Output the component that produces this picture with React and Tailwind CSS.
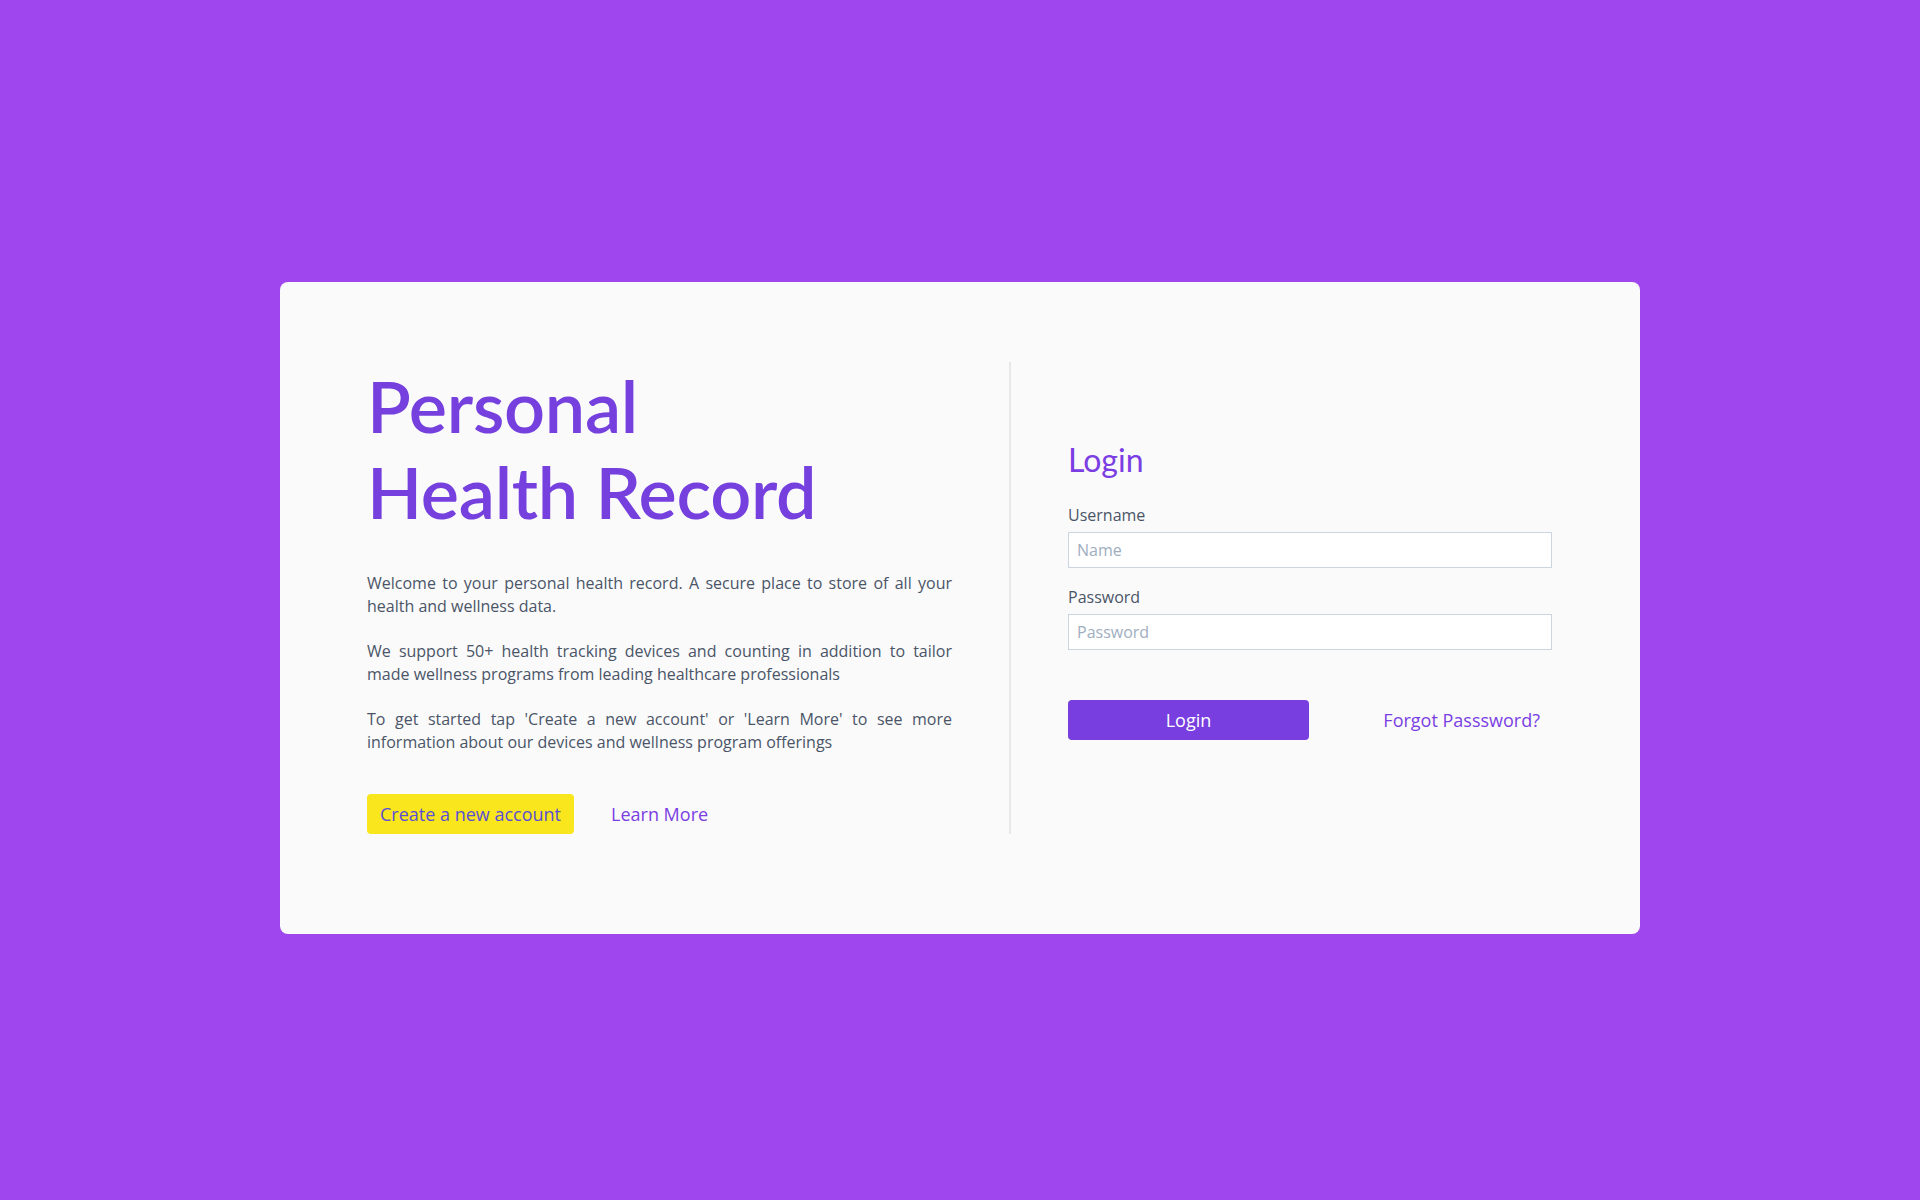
export default function App() {
  return (
    <div className="min-h-screen w-full bg-[#a046ef] flex items-center justify-center pt-4 font-['Open_Sans',sans-serif]">
      <div className="w-[1360px] h-[652px] bg-[#fafafa] rounded-lg pl-[87px] pr-[88px] pt-[80px] pb-[100px] flex">
        <div className="w-[585px] flex flex-col">
          <h1 className="font-['Lato',sans-serif] font-semibold text-[72px] leading-[1.2] tracking-[-0.3px] text-[#7540de]">
            Personal
            <br />
            Health Record
          </h1>

          <div className="mt-[37px] text-[16px] leading-[23px] text-[#4a5568] text-justify">
            <p className="mb-[22px]">
              Welcome to your personal health record. A secure place to store of all your health and wellness data.
            </p>
            <p className="mb-[22px]">
              We support 50+ health tracking devices and counting in addition to tailor made wellness programs from leading healthcare professionals
            </p>
            <p>
              To get started tap 'Create a new account' or 'Learn More' to see more information about our devices and wellness program offerings
            </p>
          </div>

          <div className="mt-auto flex items-center">
            <button className="h-10 px-[13px] bg-[#f9e61c] rounded-sm text-[18px] text-[#5a4fd6]">
              Create a new account
            </button>
            <a href="#" className="ml-[37px] text-[18px] text-[#7a3ee3]">
              Learn More
            </a>
          </div>
        </div>

        <div className="ml-[57px] w-[2px] bg-[#e8e8e8]" />

        <div className="ml-[57px] flex-1 pt-[79px]">
          <h2 className="font-['Lato',sans-serif] text-[32px] leading-[1.2] text-[#7a3ee3] mb-6">Login</h2>

          <label className="block text-[16px] leading-6 text-[#4a5568] mb-[5px]">Username</label>
          <input
            className="block w-full h-9 px-2 bg-white border border-[#cbd5e0] text-[16px] text-[#4a5568] placeholder:text-[#a0aec0] outline-none"
            placeholder="Name"
          />

          <label className="block mt-[17px] text-[16px] leading-6 text-[#4a5568] mb-[5px]">Password</label>
          <input
            type="password"
            className="block w-full h-9 px-2 bg-white border border-[#cbd5e0] text-[16px] text-[#4a5568] placeholder:text-[#a0aec0] outline-none"
            placeholder="Password"
          />

          <div className="mt-[50px] flex items-center justify-between">
            <button className="w-[241px] h-10 bg-[#783ee0] rounded-sm text-white text-[18px]">
              Login
            </button>
            <a href="#" className="px-3 text-[18px] text-[#7a3ee3]">
              Forgot Passsword?
            </a>
          </div>
        </div>
      </div>
    </div>
  );
}
